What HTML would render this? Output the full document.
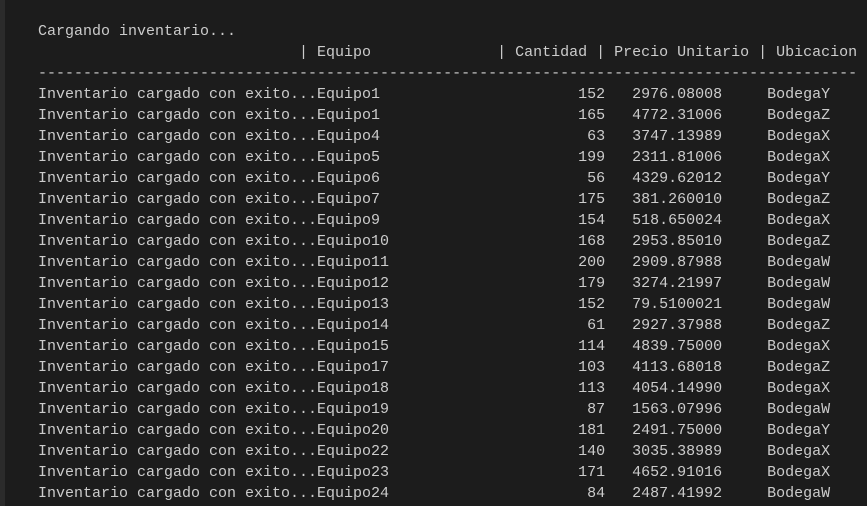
<!DOCTYPE html>
<html><head><meta charset="utf-8"><style>
html,body{margin:0;padding:0;}
body{width:867px;height:506px;background:#1c1c1c;overflow:hidden;position:relative;}
.bar{position:absolute;left:0;top:0;width:5px;height:506px;background:#2b2b2b;}
pre{position:absolute;left:38px;top:21px;margin:0;font-family:"Liberation Mono",monospace;font-size:15px;line-height:21px;color:#cccccc;white-space:pre;}
</style></head><body>
<div class="bar"></div>
<pre>Cargando inventario...
                             | Equipo              | Cantidad | Precio Unitario | Ubicacion
-------------------------------------------------------------------------------------------
Inventario cargado con exito...Equipo1                      152   2976.08008     BodegaY
Inventario cargado con exito...Equipo1                      165   4772.31006     BodegaZ
Inventario cargado con exito...Equipo4                       63   3747.13989     BodegaX
Inventario cargado con exito...Equipo5                      199   2311.81006     BodegaX
Inventario cargado con exito...Equipo6                       56   4329.62012     BodegaY
Inventario cargado con exito...Equipo7                      175   381.260010     BodegaZ
Inventario cargado con exito...Equipo9                      154   518.650024     BodegaX
Inventario cargado con exito...Equipo10                     168   2953.85010     BodegaZ
Inventario cargado con exito...Equipo11                     200   2909.87988     BodegaW
Inventario cargado con exito...Equipo12                     179   3274.21997     BodegaW
Inventario cargado con exito...Equipo13                     152   79.5100021     BodegaW
Inventario cargado con exito...Equipo14                      61   2927.37988     BodegaZ
Inventario cargado con exito...Equipo15                     114   4839.75000     BodegaX
Inventario cargado con exito...Equipo17                     103   4113.68018     BodegaZ
Inventario cargado con exito...Equipo18                     113   4054.14990     BodegaX
Inventario cargado con exito...Equipo19                      87   1563.07996     BodegaW
Inventario cargado con exito...Equipo20                     181   2491.75000     BodegaY
Inventario cargado con exito...Equipo22                     140   3035.38989     BodegaX
Inventario cargado con exito...Equipo23                     171   4652.91016     BodegaX
Inventario cargado con exito...Equipo24                      84   2487.41992     BodegaW</pre>
</body></html>
